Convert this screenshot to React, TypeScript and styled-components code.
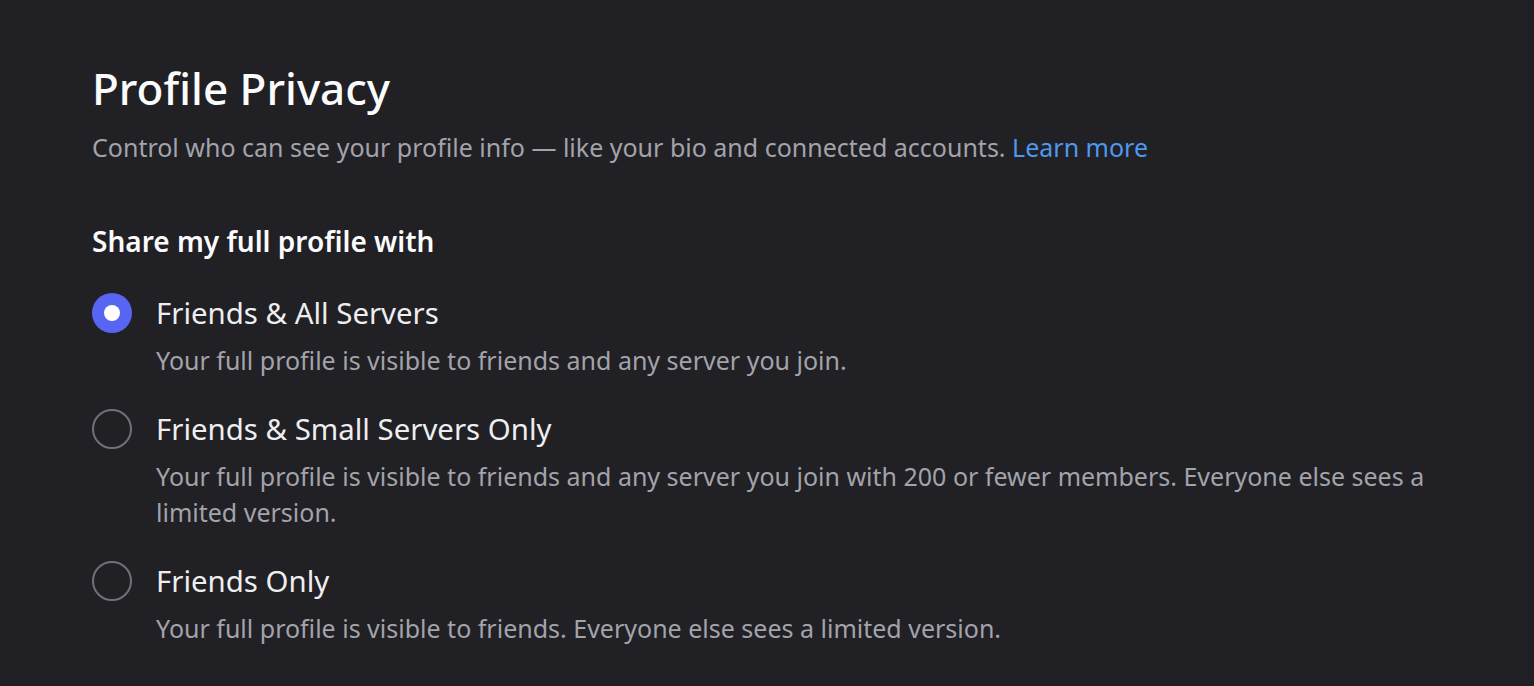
import React, { useState } from "react";
import styled, { createGlobalStyle } from "styled-components";

const Colors = {
    BG: "#202025",
    TITLE: "#fbfbfc",
    LABEL: "#eeeef0",
    MUTED: "#a3a3aa",
    LINK: "#4f98ee",
    BRAND: "#5865f2",
    RING: "#707077",
};

const GlobalStyle = createGlobalStyle`
    html, body {
        margin: 0;
        padding: 0;
        background: ${Colors.BG};
    }
    body {
        font-family: "Noto Sans", "Open Sans", sans-serif;
        -webkit-font-smoothing: antialiased;
    }
`;

const Page = styled.main`
    min-height: 686px;
    padding: 62px 60px 0 92px;
    box-sizing: border-box;
`;

const Title = styled.h1`
    margin: 0;
    font-size: 44px;
    line-height: 52px;
    font-weight: 500;
    color: ${Colors.TITLE};
`;

const Subtitle = styled.p`
    margin: 15px 0 0;
    font-size: 25px;
    line-height: 36px;
    color: ${Colors.MUTED};
`;

const Link = styled.a`
    color: ${Colors.LINK};
    text-decoration: none;
    cursor: pointer;
`;

const SectionTitle = styled.h2`
    margin: 58px 0 0;
    font-size: 28px;
    line-height: 36px;
    font-weight: 600;
    color: ${Colors.TITLE};
`;

const OptionList = styled.div`
    display: flex;
    flex-direction: column;
    gap: 31px;
    margin-top: 34px;
`;

const OptionRow = styled.label`
    display: flex;
    align-items: flex-start;
    gap: 24px;
    cursor: pointer;
`;

const Radio = styled.span<{ $checked: boolean }>`
    flex: none;
    width: 40px;
    height: 40px;
    border-radius: 50%;
    box-sizing: border-box;
    display: flex;
    align-items: center;
    justify-content: center;
    background: ${(p) => (p.$checked ? Colors.BRAND : "transparent")};
    border: ${(p) => (p.$checked ? "none" : `2px solid ${Colors.RING}`)};

    &::after {
        content: "";
        display: ${(p) => (p.$checked ? "block" : "none")};
        width: 16px;
        height: 16px;
        border-radius: 50%;
        background: #fff;
    }
`;

const OptionText = styled.div`
    display: flex;
    flex-direction: column;
    gap: 9px;
`;

const OptionLabel = styled.span`
    font-size: 29.4px;
    line-height: 40px;
    color: ${Colors.LABEL};
`;

const OptionDescription = styled.span`
    font-size: 25px;
    line-height: 36px;
    color: ${Colors.MUTED};
`;

const options = [
    {
        id: "all",
        label: "Friends & All Servers",
        description: "Your full profile is visible to friends and any server you join.",
    },
    {
        id: "small",
        label: "Friends & Small Servers Only",
        description:
            "Your full profile is visible to friends and any server you join with 200 or fewer members. Everyone else sees a limited version.",
    },
    {
        id: "friends",
        label: "Friends Only",
        description: "Your full profile is visible to friends. Everyone else sees a limited version.",
    },
];

export default function App() {
    const [selected, setSelected] = useState("all");

    return (
        <>
            <GlobalStyle />
            <Page>
                <Title>Profile Privacy</Title>
                <Subtitle>
                    Control who can see your profile info — like your bio and connected accounts.{" "}
                    <Link>Learn more</Link>
                </Subtitle>
                <SectionTitle>Share my full profile with</SectionTitle>
                <OptionList>
                    {options.map((o) => (
                        <OptionRow key={o.id} onClick={() => setSelected(o.id)}>
                            <Radio $checked={selected === o.id} />
                            <OptionText>
                                <OptionLabel>{o.label}</OptionLabel>
                                <OptionDescription>{o.description}</OptionDescription>
                            </OptionText>
                        </OptionRow>
                    ))}
                </OptionList>
            </Page>
        </>
    );
}
